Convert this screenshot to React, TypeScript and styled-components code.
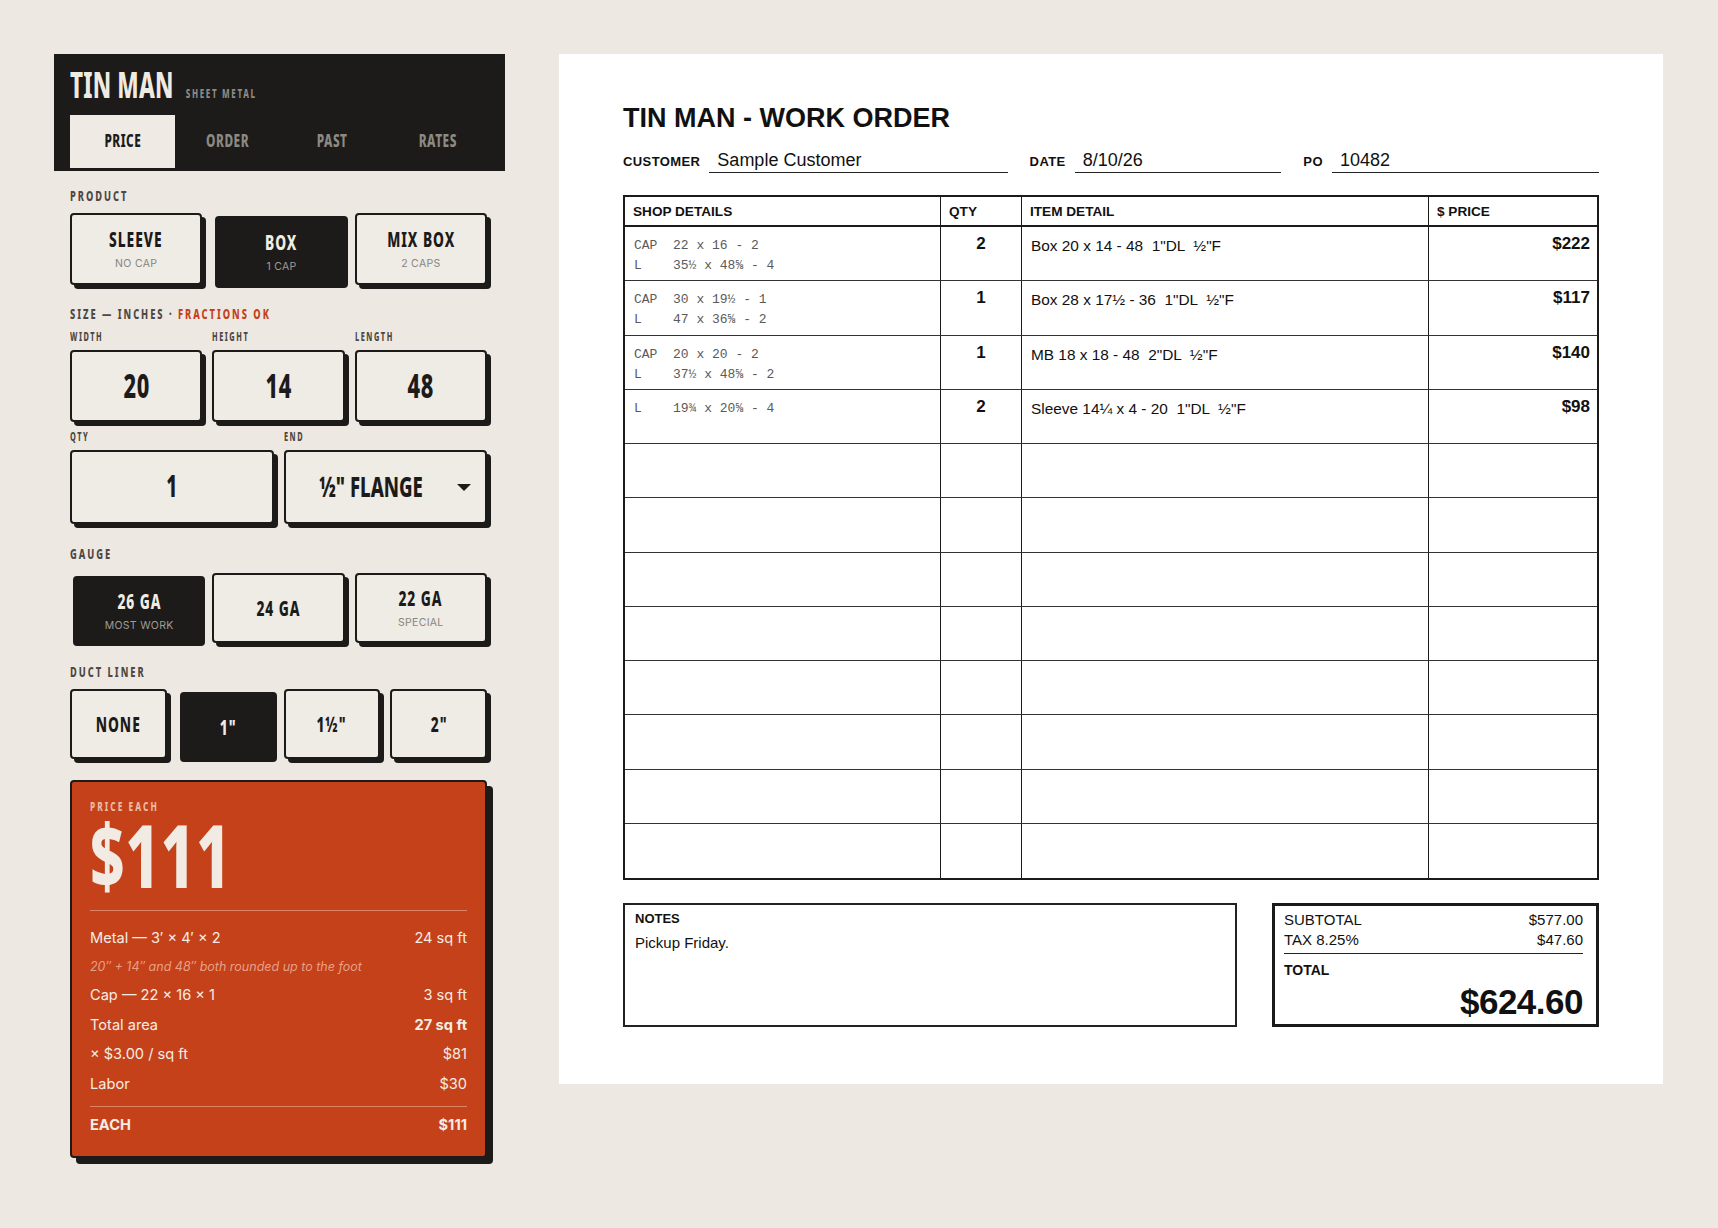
import * as React from "react";
import styled, { createGlobalStyle, css } from "styled-components";

const SANS = `"Inter", "Noto Sans", sans-serif`;
const DOC = `"Liberation Sans", Arial, sans-serif`;
const MONO = `"Liberation Mono", "Courier New", monospace`;

const INK = "#1c1b19";
const PAPER = "#ede9e2";
const RUST = "#c4411a";

// no condensed face is installed, so the poster lettering is Noto Sans squeezed horizontally
const condensed = css`
  font-family: "Noto Sans", "DejaVu Sans", sans-serif;
  font-weight: 800;
`;

const squeeze = (origin: string, factor = 0.64) => css`
  transform: scaleX(${factor});
  transform-origin: ${origin};
`;

const GlobalStyle = createGlobalStyle`
  body {
    margin: 0;
    background: ${PAPER};
  }
`;

const Screen = styled.div`
  display: flex;
  align-items: flex-start;
  gap: 54px;
  padding: 54px;
  min-height: 1228px;
  box-sizing: border-box;
`;

/* ---------- left: price calculator ---------- */

const Sidebar = styled.aside`
  width: 451px;
  flex: none;
`;

const Masthead = styled.header`
  background: ${INK};
  padding: 11px 15px 3px 16px;
`;

const Brand = styled.div`
  display: flex;
  align-items: baseline;
  gap: 19px;
  height: 50px;
  ${squeeze("left")};
`;

const BrandName = styled.h1`
  margin: 0;
  ${condensed};
  font-size: 35px;
  line-height: 40px;
  letter-spacing: 0.3px;
  color: #efeae2;
`;

const BrandTag = styled.span`
  ${condensed};
  font-size: 12.5px;
  letter-spacing: 2.6px;
  color: #8d8983;
`;

const Tabs = styled.nav`
  display: grid;
  grid-template-columns: repeat(4, 1fr);
`;

const Tab = styled.div<{ $active?: boolean }>`
  height: 53px;
  box-sizing: border-box;
  padding-bottom: 4px;
  display: flex;
  align-items: center;
  justify-content: center;
  color: ${(p) => (p.$active ? INK : "#8d8983")};
  background: ${(p) => (p.$active ? "#efeae3" : "transparent")};
`;

const TabText = styled.span`
  display: inline-block;
  ${condensed};
  font-size: 18.5px;
  letter-spacing: 0.8px;
  ${squeeze("center")};
`;

const Controls = styled.div`
  padding: 16px 14px 40px 16px;
`;

const Section = styled.section<{ $top?: number }>`
  margin-top: ${(p) => p.$top ?? 0}px;
`;

const SectionLabel = styled.div<{ $mb?: number }>`
  ${condensed};
  font-size: 14.5px;
  line-height: 16px;
  letter-spacing: 3.1px;
  color: #4d4843;
  white-space: nowrap;
  margin-bottom: ${(p) => p.$mb ?? 10}px;
  ${squeeze("left")};
`;

const Accent = styled.span`
  color: ${RUST};
`;

const FieldLabel = styled.div`
  ${condensed};
  font-size: 11.5px;
  line-height: 13px;
  letter-spacing: 2.4px;
  color: #4d4843;
  margin-bottom: 7px;
  ${squeeze("left")};
`;

const Grid = styled.div<{ $cols: number }>`
  display: grid;
  grid-template-columns: repeat(${(p) => p.$cols}, minmax(0, 1fr));
  gap: 10px;
  padding-right: 4px;
`;

const boxed = css<{ $active?: boolean }>`
  box-sizing: border-box;
  border: 2px solid ${INK};
  border-radius: 4px;
  background: ${(p) => (p.$active ? INK : "#efebe5")};
  color: ${(p) => (p.$active ? "#f1ece4" : INK)};
  box-shadow: ${(p) => (p.$active ? "none" : `4px 4px 0 ${INK}`)};
  transform: ${(p) => (p.$active ? "translate(3px, 3px)" : "none")};
`;

const OptionButton = styled.div<{ $active?: boolean; $h?: number }>`
  ${boxed};
  height: ${(p) => p.$h ?? 72}px;
  display: flex;
  flex-direction: column;
  align-items: center;
  justify-content: center;
  gap: 8px;
`;

const OptionTitle = styled.div`
  display: inline-block;
  ${condensed};
  font-size: 21.5px;
  line-height: 22px;
  letter-spacing: 1.5px;
  white-space: nowrap;
  ${squeeze("center")};
`;

const OptionSub = styled.div<{ $active?: boolean }>`
  font-family: ${SANS};
  font-size: 10.5px;
  line-height: 12px;
  letter-spacing: 0.3px;
  color: ${(p) => (p.$active ? "#a19c96" : "#8a857f")};
`;

const ValueBox = styled.div<{ $h?: number }>`
  ${boxed};
  height: ${(p) => p.$h ?? 72}px;
  padding-bottom: 3px;
  display: flex;
  align-items: center;
  justify-content: center;
`;

const ValueText = styled.span<{ $size?: number; $spacing?: number }>`
  display: inline-block;
  ${condensed};
  font-size: ${(p) => p.$size ?? 34}px;
  letter-spacing: ${(p) => p.$spacing ?? 1}px;
  white-space: nowrap;
  ${squeeze("center")};
`;

const SelectBox = styled(ValueBox)`
  position: relative;
  padding-right: 28px;
`;

const Caret = styled.svg`
  position: absolute;
  right: 14px;
  top: 32px;
`;

const PriceCard = styled.div`
  margin-top: 21px;
  width: 417px;
  box-sizing: border-box;
  background: ${RUST};
  border: 2px solid ${INK};
  border-radius: 4px;
  box-shadow: 6px 6px 0 ${INK};
  padding: 16px 18px 21px;
  color: #f4ede5;
`;

const CardEyebrow = styled.div`
  ${condensed};
  font-size: 13px;
  line-height: 16px;
  letter-spacing: 3.2px;
  color: #ebbba3;
  ${squeeze("left")};
`;

const BigPrice = styled.div`
  margin-top: 2px;
  ${condensed};
  font-size: 87px;
  line-height: 76px;
  letter-spacing: 1px;
  color: #f1ebe3;
  ${squeeze("left", 0.69)};
`;

const Rule = styled.hr<{ $above: number; $below: number }>`
  border: 0;
  border-top: 1px solid rgba(255, 214, 196, 0.45);
  margin: ${(p) => p.$above}px 0 ${(p) => p.$below}px;
`;

const Breakdown = styled.div`
  display: flex;
  flex-direction: column;
  gap: 9.6px;
`;

const Line = styled.div<{ $bold?: boolean }>`
  display: flex;
  justify-content: space-between;
  font-family: ${SANS};
  font-size: 14.6px;
  line-height: 20px;
  font-weight: ${(p) => (p.$bold ? 700 : 400)};
`;

const Strong = styled.span`
  font-weight: 700;
`;

const Note = styled.div`
  font-family: ${SANS};
  font-size: 12.5px;
  font-style: italic;
  line-height: 20px;
  color: rgba(255, 222, 205, 0.62);
  margin: -1px 0 -1px;
`;

/* ---------- right: work order sheet ---------- */

const Sheet = styled.main`
  width: 1104px;
  flex: none;
  box-sizing: border-box;
  background: #fff;
  padding: 49px 64px 57px;
  font-family: ${DOC};
  color: #111;
`;

const SheetTitle = styled.h2`
  margin: 0;
  font-size: 27px;
  line-height: 31px;
  font-weight: 700;
  color: #111;
`;

const FieldRow = styled.div`
  display: flex;
  align-items: baseline;
  margin-top: 15px;
`;

const FormLabel = styled.span<{ $first?: boolean }>`
  font-size: 13px;
  font-weight: 700;
  letter-spacing: 0.4px;
  margin-left: ${(p) => (p.$first ? 0 : 22)}px;
`;

const FormValue = styled.span<{ $grow: number }>`
  flex: ${(p) => p.$grow} 1 0;
  margin-left: 9px;
  padding: 0 8px 1px;
  font-size: 18px;
  line-height: 22px;
  border-bottom: 1.5px solid #222;
`;

const Table = styled.div`
  margin-top: 22px;
  border: 2px solid ${INK};
`;

const cols = css`
  display: grid;
  grid-template-columns: 315px 81px 407px 1fr;
`;

const HeadRow = styled.div`
  ${cols};
  height: 30px;
  box-sizing: border-box;
  border-bottom: 2px solid ${INK};
`;

const HeadCell = styled.div`
  display: flex;
  align-items: center;
  padding: 0 8px;
  font-size: 13.6px;
  font-weight: 700;
  & + & {
    border-left: 1px solid ${INK};
  }
`;

const BodyRow = styled.div`
  ${cols};
  height: 54.25px;
  box-sizing: border-box;
  border-bottom: 1px solid #333;
  &:last-child {
    border-bottom: 0;
  }
`;

const Cell = styled.div<{ $align?: "left" | "center" | "right" }>`
  padding: 9px ${(p) => (p.$align === "right" ? 7 : 9)}px 0 9px;
  text-align: ${(p) => p.$align ?? "left"};
  & + & {
    border-left: 1px solid ${INK};
  }
`;

const Shop = styled.div`
  font-family: ${MONO};
  font-size: 13px;
  line-height: 20px;
  color: #5a5a5a;
  white-space: pre;
`;

const Qty = styled.div`
  margin-top: -2px;
  font-size: 17px;
  font-weight: 700;
  line-height: 20px;
`;

const Item = styled.div`
  font-size: 15.4px;
  line-height: 20px;
  white-space: pre;
`;

const Price = styled.div`
  margin-top: -2px;
  font-size: 17px;
  font-weight: 700;
  line-height: 20px;
`;

const Footer = styled.div`
  display: flex;
  gap: 35px;
  margin-top: 23px;
`;

const NotesBox = styled.div`
  flex: 1;
  height: 124px;
  box-sizing: border-box;
  border: 2px solid #222;
  padding: 5px 10px;
`;

const NotesLabel = styled.div`
  font-size: 13px;
  font-weight: 700;
  line-height: 18px;
`;

const NotesText = styled.div`
  margin-top: 5px;
  font-size: 15px;
  line-height: 20px;
`;

const TotalsBox = styled.div`
  width: 327px;
  height: 124px;
  box-sizing: border-box;
  border: 3px solid ${INK};
  padding: 4px 13px 0 9px;
`;

const TotalLine = styled.div`
  display: flex;
  justify-content: space-between;
  font-size: 15px;
  line-height: 20px;
`;

const TotalsRule = styled.div`
  border-top: 1.5px solid #222;
  margin-top: 3px;
`;

const TotalLabel = styled.div`
  margin-top: 7px;
  font-size: 14px;
  font-weight: 700;
  line-height: 18px;
`;

const GrandTotal = styled.div`
  text-align: right;
  font-size: 35px;
  font-weight: 700;
  letter-spacing: -0.5px;
  line-height: 40px;
  margin-top: 3px;
`;

type Order = { shop: string; qty: number; item: string; price: string };

const orders: Order[] = [
  { shop: "CAP  22 x 16 - 2\nL    35½ x 48⅝ - 4", qty: 2, item: 'Box 20 x 14 - 48  1"DL  ½"F', price: "$222" },
  { shop: "CAP  30 x 19½ - 1\nL    47 x 36⅝ - 2", qty: 1, item: 'Box 28 x 17½ - 36  1"DL  ½"F', price: "$117" },
  { shop: "CAP  20 x 20 - 2\nL    37½ x 48⅝ - 2", qty: 1, item: 'MB 18 x 18 - 48  2"DL  ½"F', price: "$140" },
  { shop: "L    19¾ x 20⅝ - 4", qty: 2, item: 'Sleeve 14¼ x 4 - 20  1"DL  ½"F', price: "$98" },
];

const products = [
  { title: "SLEEVE", sub: "NO CAP" },
  { title: "BOX", sub: "1 CAP", active: true },
  { title: "MIX BOX", sub: "2 CAPS" },
];

const gauges = [
  { title: "26 GA", sub: "MOST WORK", active: true },
  { title: "24 GA" },
  { title: "22 GA", sub: "SPECIAL" },
];

const liners = [
  { title: "NONE" },
  { title: '1"', active: true },
  { title: '1½"' },
  { title: '2"' },
];

const tabs = ["PRICE", "ORDER", "PAST", "RATES"];

const App: React.FunctionComponent = () => {
  const blanks = Array.from({ length: 12 - orders.length });
  return (
    <>
      <GlobalStyle />
      <Screen>
        <Sidebar>
          <Masthead>
            <Brand>
              <BrandName>TIN MAN</BrandName>
              <BrandTag>SHEET METAL</BrandTag>
            </Brand>
            <Tabs>
              {tabs.map((t, i) => (
                <Tab key={t} $active={i === 0}>
                  <TabText>{t}</TabText>
                </Tab>
              ))}
            </Tabs>
          </Masthead>

          <Controls>
            <Section>
              <SectionLabel>PRODUCT</SectionLabel>
              <Grid $cols={3}>
                {products.map((p) => (
                  <OptionButton key={p.title} $active={p.active}>
                    <OptionTitle>{p.title}</OptionTitle>
                    <OptionSub $active={p.active}>{p.sub}</OptionSub>
                  </OptionButton>
                ))}
              </Grid>
            </Section>

            <Section $top={20}>
              <SectionLabel $mb={9}>
                SIZE — INCHES · <Accent>FRACTIONS OK</Accent>
              </SectionLabel>
              <Grid $cols={3}>
                {[
                  ["WIDTH", "20"],
                  ["HEIGHT", "14"],
                  ["LENGTH", "48"],
                ].map(([label, value]) => (
                  <div key={label}>
                    <FieldLabel>{label}</FieldLabel>
                    <ValueBox>
                      <ValueText>{value}</ValueText>
                    </ValueBox>
                  </div>
                ))}
              </Grid>
            </Section>

            <Section $top={8}>
              <Grid $cols={2}>
                <div>
                  <FieldLabel>QTY</FieldLabel>
                  <ValueBox $h={74}>
                    <ValueText $size={30}>1</ValueText>
                  </ValueBox>
                </div>
                <div>
                  <FieldLabel>END</FieldLabel>
                  <SelectBox $h={74}>
                    <ValueText $size={29} $spacing={0}>
                      ½" FLANGE
                    </ValueText>
                    <Caret width="14" height="7" viewBox="0 0 14 7">
                      <polygon points="0,0 14,0 7,7" fill={INK} />
                    </Caret>
                  </SelectBox>
                </div>
              </Grid>
            </Section>

            <Section $top={21}>
              <SectionLabel $mb={12}>GAUGE</SectionLabel>
              <Grid $cols={3}>
                {gauges.map((g) => (
                  <OptionButton key={g.title} $active={g.active} $h={70}>
                    <OptionTitle>{g.title}</OptionTitle>
                    {g.sub && <OptionSub $active={g.active}>{g.sub}</OptionSub>}
                  </OptionButton>
                ))}
              </Grid>
            </Section>

            <Section $top={20}>
              <SectionLabel>DUCT LINER</SectionLabel>
              <Grid $cols={4}>
                {liners.map((l) => (
                  <OptionButton key={l.title} $active={l.active} $h={70}>
                    <OptionTitle>{l.title}</OptionTitle>
                  </OptionButton>
                ))}
              </Grid>
            </Section>

            <PriceCard>
              <CardEyebrow>PRICE EACH</CardEyebrow>
              <BigPrice>$111</BigPrice>
              <Rule $above={18} $below={17} />
              <Breakdown>
                <Line>
                  <span>Metal — 3′ × 4′ × 2</span>
                  <span>24 sq ft</span>
                </Line>
                <Note>20″ + 14″ and 48″ both rounded up to the foot</Note>
                <Line>
                  <span>Cap — 22 x 16 × 1</span>
                  <span>3 sq ft</span>
                </Line>
                <Line>
                  <span>Total area</span>
                  <Strong>27 sq ft</Strong>
                </Line>
                <Line>
                  <span>× $3.00 / sq ft</span>
                  <span>$81</span>
                </Line>
                <Line>
                  <span>Labor</span>
                  <span>$30</span>
                </Line>
              </Breakdown>
              <Rule $above={12} $below={8} />
              <Line $bold>
                <span>EACH</span>
                <span>$111</span>
              </Line>
            </PriceCard>
          </Controls>
        </Sidebar>

        <Sheet>
          <SheetTitle>TIN MAN - WORK ORDER</SheetTitle>
          <FieldRow>
            <FormLabel $first>CUSTOMER</FormLabel>
            <FormValue $grow={299}>Sample Customer</FormValue>
            <FormLabel>DATE</FormLabel>
            <FormValue $grow={202}>8/10/26</FormValue>
            <FormLabel>PO</FormLabel>
            <FormValue $grow={266}>10482</FormValue>
          </FieldRow>

          <Table>
            <HeadRow>
              <HeadCell>SHOP DETAILS</HeadCell>
              <HeadCell>QTY</HeadCell>
              <HeadCell>ITEM DETAIL</HeadCell>
              <HeadCell>$ PRICE</HeadCell>
            </HeadRow>
            {orders.map((o, i) => (
              <BodyRow key={i}>
                <Cell>
                  <Shop>{o.shop}</Shop>
                </Cell>
                <Cell $align="center">
                  <Qty>{o.qty}</Qty>
                </Cell>
                <Cell>
                  <Item>{o.item}</Item>
                </Cell>
                <Cell $align="right">
                  <Price>{o.price}</Price>
                </Cell>
              </BodyRow>
            ))}
            {blanks.map((_, i) => (
              <BodyRow key={`blank-${i}`}>
                <Cell />
                <Cell />
                <Cell />
                <Cell />
              </BodyRow>
            ))}
          </Table>

          <Footer>
            <NotesBox>
              <NotesLabel>NOTES</NotesLabel>
              <NotesText>Pickup Friday.</NotesText>
            </NotesBox>
            <TotalsBox>
              <TotalLine>
                <span>SUBTOTAL</span>
                <span>$577.00</span>
              </TotalLine>
              <TotalLine>
                <span>TAX 8.25%</span>
                <span>$47.60</span>
              </TotalLine>
              <TotalsRule />
              <TotalLabel>TOTAL</TotalLabel>
              <GrandTotal>$624.60</GrandTotal>
            </TotalsBox>
          </Footer>
        </Sheet>
      </Screen>
    </>
  );
};

export default App;
